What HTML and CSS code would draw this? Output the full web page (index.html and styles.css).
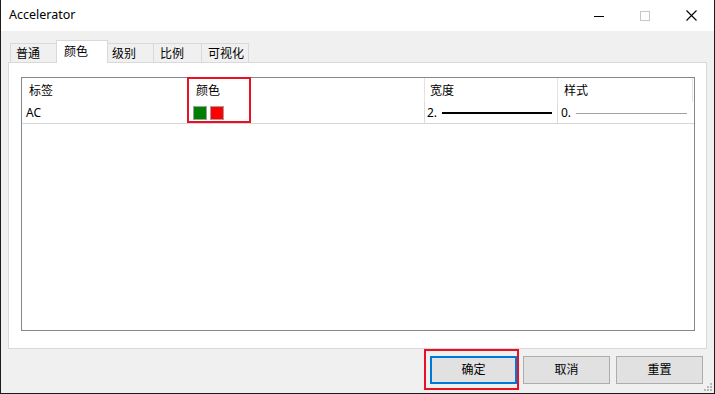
FILE: index.html
```html
<!DOCTYPE html>
<html lang="zh">
<head>
<meta charset="utf-8">
<title>Accelerator</title>
<link rel="stylesheet" href="styles.css">
</head>
<body>
<div class="window">
  <div class="titlebar">
    <span class="title">Accelerator</span>
    <div class="controls">
      <span class="ctl"><svg width="10" height="10" viewBox="0 0 10 10"><line x1="0" y1="5.5" x2="10" y2="5.5" stroke="#000" stroke-width="1"/></svg></span>
      <span class="ctl"><svg width="10" height="10" viewBox="0 0 10 10"><rect x="0.5" y="0.5" width="9" height="9" fill="none" stroke="#c6c6c6" stroke-width="1"/></svg></span>
      <span class="ctl"><svg width="11" height="11" viewBox="0 0 11 11"><path d="M0.5 0.5L10.5 10.5M10.5 0.5L0.5 10.5" stroke="#000" stroke-width="1.1"/></svg></span>
    </div>
  </div>
  <div class="main">
    <div class="tabs">
      <div class="tab w1">普通</div>
      <div class="tab sel">颜色</div>
      <div class="tab w3">级别</div>
      <div class="tab w4">比例</div>
      <div class="tab w5">可视化</div>
    </div>
    <div class="panel">
      <div class="list">
        <div class="row head">
          <div class="cell hc1">标签</div>
          <div class="cell hc2">颜色</div>
          <div class="cell hc3">宽度</div>
          <div class="cell hc4">样式</div>
        </div>
        <div class="row item">
          <div class="cell rc1">AC</div>
          <div class="cell rc2"><span class="sw green"></span><span class="sw red"></span></div>
          <div class="cell rc3"><span>2.</span><span class="ln thick"></span></div>
          <div class="cell rc4"><span>0.</span><span class="ln thin"></span></div>
        </div>
        <div class="mark mark-col"></div>
      </div>
    </div>
    <div class="buttons">
      <div class="btn-wrap">
        <button class="btn default">确定</button>
        <div class="mark mark-btn"></div>
      </div>
      <button class="btn">取消</button>
      <button class="btn">重置</button>
    </div>
  </div>
  <svg class="grip" width="12" height="12" viewBox="0 0 12 12">
    <rect x="9" y="3" width="2" height="2" fill="#b8b8b8"/>
    <rect x="6" y="6" width="2" height="2" fill="#b8b8b8"/>
    <rect x="9" y="6" width="2" height="2" fill="#b8b8b8"/>
    <rect x="3" y="9" width="2" height="2" fill="#b8b8b8"/>
    <rect x="6" y="9" width="2" height="2" fill="#b8b8b8"/>
    <rect x="9" y="9" width="2" height="2" fill="#b8b8b8"/>
  </svg>
</div>
</body>
</html>
```
FILE: styles.css
```css
html, body {
  margin: 0;
  padding: 0;
}
body {
  background: #1c1c1c;
  font-family: "Noto Sans", "Noto Sans CJK SC", sans-serif;
  font-size: 12px;
  color: #000;
  width: 715px;
  height: 394px;
  overflow: hidden;
}
.window {
  margin-left: 1px;
  width: 713px;
  height: 393px;
  background: #f0f0f0;
  display: flex;
  flex-direction: column;
  position: relative;
}
.titlebar {
  height: 31px;
  flex-shrink: 0;
  background: #fff;
  display: flex;
  align-items: center;
}
.title {
  padding-left: 8px;
  font-size: 12.5px;
  line-height: 1;
  padding-bottom: 1px;
}
.controls {
  margin-left: auto;
  display: flex;
  height: 100%;
}
.ctl {
  width: 46px;
  display: flex;
  align-items: center;
  justify-content: center;
}
.ctl svg { display: block; }
.main {
  padding: 9px 7px 0 7px;
  display: flex;
  flex-direction: column;
}
.tabs {
  display: flex;
  align-items: flex-end;
  height: 23px;
  margin-left: 2px;
  margin-bottom: -1px;
  position: relative;
  z-index: 1;
}
.tab {
  box-sizing: border-box;
  height: 19px;
  margin-bottom: 1px;
  margin-left: -1px;
  border: 1px solid #d9d9d9;
  border-bottom: none;
  background: #f0f0f0;
  display: flex;
  align-items: center;
  padding-left: 5px;
  padding-top: 1px;
  line-height: 1;
  white-space: nowrap;
}
.tab.w1 { width: 47px; margin-left: 0; }
.tab.sel {
  width: 52px;
  height: 23px;
  margin-bottom: 0;
  background: #fff;
  padding-left: 7px;
  padding-top: 0;
  position: relative;
  z-index: 2;
}
.tab.w3 { width: 47px; padding-left: 4px; }
.tab.w4 { width: 49px; padding-left: 6px; }
.tab.w5 { width: 48px; padding-left: 6px; }
.panel {
  box-sizing: border-box;
  height: 287px;
  background: #fff;
  border: 1px solid #d9d9d9;
  padding: 14px 11px 17px 12px;
  display: flex;
}
.list {
  flex: 1;
  border: 1px solid #828790;
  position: relative;
  background: #fff;
}
.row {
  display: grid;
  grid-template-columns: 166px 237px 133px 135px;
}
.cell {
  box-sizing: border-box;
  display: flex;
  align-items: center;
  line-height: 1;
  white-space: nowrap;
}
.head { height: 24px; }
.head .cell { border-right: 1px solid #e3e3e3; padding-left: 6px; padding-top: 1px; }
.head .hc1 { padding-left: 7px; }
.head .hc2 { padding-left: 8px; }
.head .hc3 { padding-left: 5px; }
.item {
  box-sizing: border-box;
  height: 22px;
  border-bottom: 1px solid #d6d6d6;
}
.item .cell { border-right: 1px solid #dcdcdc; padding-top: 1px; }
.item .rc1 { padding-left: 4px; }
.item .rc2 { padding-left: 5px; gap: 3px; }
.item .rc3 { padding-left: 2px; }
.item .rc4 { padding-left: 3px; border-right: none; }
.sw {
  box-sizing: border-box;
  width: 14px;
  height: 14px;
  border: 1px solid #a0a0a0;
  display: block;
}
.sw.green { background: #008000; }
.sw.red { background: #ff0000; }
.ln { flex: 1; display: block; }
.ln.thick { height: 2px; background: #000; margin: 0 5px 0 5px; }
.ln.thin { height: 1px; background: #a0a0a0; margin: 1px 6px 0 5px; }
.mark {
  position: absolute;
  box-sizing: border-box;
  border: 2px solid #e81123;
  pointer-events: none;
}
.mark-col {
  left: 165px;
  top: -1px;
  width: 64px;
  height: 46px;
}
.buttons {
  display: flex;
  justify-content: flex-end;
  gap: 6px;
  margin-top: 7px;
  padding-right: 4px;
}
.btn-wrap { position: relative; display: flex; }
.btn {
  box-sizing: border-box;
  width: 87px;
  height: 28px;
  background: #e1e1e1;
  border: 1px solid #adadad;
  font-family: inherit;
  font-size: 12px;
  color: #000;
  padding: 0;
  margin: 0;
  line-height: 1;
}
.btn.default { border: 2px solid #0078d7; }
.mark-btn {
  left: -6px;
  top: -7px;
  width: 95px;
  height: 41px;
}
.grip {
  position: absolute;
  right: 1px;
  bottom: 1px;
  display: block;
}
```
